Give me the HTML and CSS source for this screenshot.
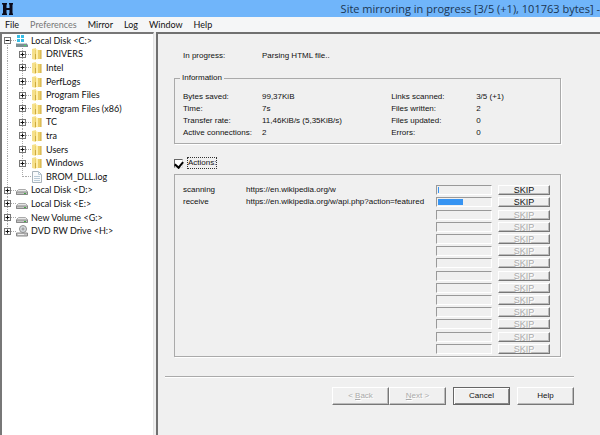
FILE: index.html
```
<!DOCTYPE html>
<html lang="en">
<head>
    <meta charset="UTF-8">
    <meta name="viewport" content="width=device-width, initial-scale=1.0">
    <title>Site mirroring in progress</title>
    <link rel="stylesheet" href="styles.css">
</head>
<body>
    <!-- shared icons -->
    <svg class="defs" aria-hidden="true">
        <symbol id="plus" viewBox="0 0 7 7">
            <rect x=".5" y=".5" width="6" height="6" fill="#fff" stroke="#777"/>
            <path d="M1.5 3.5h4M3.5 1.5v4" stroke="#111"/>
        </symbol>
        <symbol id="minus" viewBox="0 0 7 7">
            <rect x=".5" y=".5" width="6" height="6" fill="#fff" stroke="#777"/>
            <path d="M1.5 3.5h4" stroke="#111"/>
        </symbol>
        <symbol id="folder" viewBox="0 0 12 12">
            <path d="M1 1l4-1v12l-4-1z" fill="#f5e08c"/>
            <path d="M4 2h6v9H4z" fill="#ecd06a"/>
            <path d="M5 1l2 1v9.500l-2-1z" fill="#fff0ac"/>
            <path d="M10 2v9M4.500 6v5" stroke="#cfaa3e"/>
        </symbol>
        <symbol id="file" viewBox="0 0 12 12">
            <path d="M1.500.5h6l3 3v8h-9z" fill="#f8fafb" stroke="#a9b3ba"/>
            <path d="M7.500.5v3h3M3 5.500h6M3 7.500h6M3 9.500h6" fill="none" stroke="#b9cad6"/>
        </symbol>
        <symbol id="disk" viewBox="0 0 12 12">
            <path d="M2.500 5.500h7l2 2v3h-11v-3z" fill="#e6e6e6" stroke="#aaa"/>
            <path d="M.5 8h11v2.500h-11z" fill="#c4c4c4" stroke="#888"/>
            <path d="M8 9.500h2" stroke="#4a4"/>
        </symbol>
        <symbol id="system" viewBox="0 0 12 12">
            <path d="M1 0h3v3H1zM5 0h3v3H5zM1 4h3v3H1zM5 4h3v3H5z" fill="#35bde6"/>
            <path d="M1 8h9l2 2v2H0V9z" fill="#7d8e93"/>
            <path d="M1 8.500h9" stroke="#c4d2d5"/>
            <path d="M8 10.500h2" stroke="#4d6"/>
        </symbol>
        <symbol id="dvd" viewBox="0 0 12 12">
            <circle cx="7" cy="4" r="3.500" fill="#d5dade" stroke="#909090"/>
            <circle cx="7" cy="4" r="1" fill="#fff" stroke="#888"/>
            <path d="M.5 8h11v3h-11z" fill="#c4c4c4" stroke="#888"/>
            <path d="M2 9.500h6" stroke="#eee"/>
        </symbol>
    </svg>

    <div class="window">
        <header class="titlebar">
            <svg class="logo" viewBox="0 0 12 12" aria-hidden="true">
                <path d="M0 0h5v1l-.5 1v3h3V2L7 1V0h4v1l-.5 1v8l.5 1v1H7v-1l.5-1V7h-3v3l.5 1v1H0v-1l1-1V2L0 1z" fill="#0b0b1c"/>
            </svg>
            <span class="title">Site mirroring in progress [3/5 (+1), 101763 bytes] -</span>
        </header>

        <nav class="menubar">
            <button type="button">File</button>
            <button type="button" disabled>Preferences</button>
            <button type="button">Mirror</button>
            <button type="button">Log</button>
            <button type="button">Window</button>
            <button type="button">Help</button>
        </nav>

        <div class="panes">
            <aside class="tree-pane">
                <ul class="tree">
                    <li><svg class="toggle"><use href="#minus"/></svg><svg class="icon"><use href="#system"/></svg>Local Disk &lt;C:&gt;</li>
                    <li class="child"><svg class="toggle"><use href="#plus"/></svg><svg class="icon"><use href="#folder"/></svg>DRIVERS</li>
                    <li class="child"><svg class="toggle"><use href="#plus"/></svg><svg class="icon"><use href="#folder"/></svg>Intel</li>
                    <li class="child"><svg class="toggle"><use href="#plus"/></svg><svg class="icon"><use href="#folder"/></svg>PerfLogs</li>
                    <li class="child"><svg class="toggle"><use href="#plus"/></svg><svg class="icon"><use href="#folder"/></svg>Program Files</li>
                    <li class="child"><svg class="toggle"><use href="#plus"/></svg><svg class="icon"><use href="#folder"/></svg>Program Files (x86)</li>
                    <li class="child"><svg class="toggle"><use href="#plus"/></svg><svg class="icon"><use href="#folder"/></svg>TC</li>
                    <li class="child"><svg class="toggle"><use href="#plus"/></svg><svg class="icon"><use href="#folder"/></svg>tra</li>
                    <li class="child"><svg class="toggle"><use href="#plus"/></svg><svg class="icon"><use href="#folder"/></svg>Users</li>
                    <li class="child"><svg class="toggle"><use href="#plus"/></svg><svg class="icon"><use href="#folder"/></svg>Windows</li>
                    <li class="child last"><span class="toggle"></span><svg class="icon"><use href="#file"/></svg>BROM_DLL.log</li>
                    <li><svg class="toggle"><use href="#plus"/></svg><svg class="icon"><use href="#disk"/></svg>Local Disk &lt;D:&gt;</li>
                    <li><svg class="toggle"><use href="#plus"/></svg><svg class="icon"><use href="#disk"/></svg>Local Disk &lt;E:&gt;</li>
                    <li><svg class="toggle"><use href="#plus"/></svg><svg class="icon"><use href="#disk"/></svg>New Volume &lt;G:&gt;</li>
                    <li><svg class="toggle"><use href="#plus"/></svg><svg class="icon"><use href="#dvd"/></svg>DVD RW Drive &lt;H:&gt;</li>
                </ul>
            </aside>

            <main class="progress-pane">
                <div class="status">
                    <span>In progress:</span>
                    <span>Parsing HTML file..</span>
                </div>

                <fieldset class="info">
                    <legend>Information</legend>
                    <table>
                        <tr><th>Bytes saved:</th><td>99,37KiB</td><th>Links scanned:</th><td>3/5 (+1)</td></tr>
                        <tr><th>Time:</th><td>7s</td><th>Files written:</th><td>2</td></tr>
                        <tr><th>Transfer rate:</th><td>11,46KiB/s (5,35KiB/s)</td><th>Files updated:</th><td>0</td></tr>
                        <tr><th>Active connections:</th><td>2</td><th>Errors:</th><td>0</td></tr>
                    </table>
                </fieldset>

                <div class="actions-toggle">
                    <input type="checkbox" id="actions" checked>
                    <label for="actions">Actions:</label>
                </div>

                <div class="actions" id="actionList">
                    <div class="action">
                        <span>scanning</span>
                        <span>https://en.wikipedia.org/w</span>
                        <progress value="2" max="100" aria-label="scanning"></progress>
                        <button type="button">SKIP</button>
                    </div>
                    <div class="action">
                        <span>receive</span>
                        <span>https://en.wikipedia.org/w/api.php?action=featured</span>
                        <progress value="48" max="100" aria-label="receive"></progress>
                        <button type="button">SKIP</button>
                    </div>
                </div>

                <div class="wizard-buttons">
                    <div class="pair">
                        <button type="button" disabled>&lt; <u>B</u>ack</button>
                        <button type="button" disabled><u>N</u>ext &gt;</button>
                    </div>
                    <button type="button" class="default">Cancel</button>
                    <button type="button">Help</button>
                </div>
            </main>
        </div>
    </div>

    <script>
        // fill the remaining slots with idle rows
        const list = document.getElementById('actionList');
        while (list.children.length < 14) {
            const row = document.createElement('div');
            row.className = 'action';
            row.innerHTML = '<span></span><span></span>' +
                '<progress value="0" max="100" aria-label="idle"></progress>' +
                '<button type="button" disabled>SKIP</button>';
            list.appendChild(row);
        }
    </script>
</body>
</html>
```
FILE: styles.css
```
* {
    box-sizing: border-box;
}

body {
    margin: 0;
    background: #f0f0f0;
    color: #111;
    font-family: "Liberation Sans", Arial, sans-serif;
    font-size: 8px;
    line-height: 12px;
}

button {
    font: inherit;
    color: inherit;
}

.defs {
    display: none;
}

.window {
    display: flex;
    flex-direction: column;
    min-height: 100vh;
}

/* Title bar */
.titlebar {
    display: flex;
    align-items: center;
    justify-content: space-between;
    height: 17px;
    padding: 0 0 0 2px;
    background: #70b5fa;
    color: #1b3653;
    font-family: "Open Sans", "Noto Sans", sans-serif;
    font-size: 11px;
}

.logo {
    width: 12px;
    height: 12px;
}

.title {
    white-space: nowrap;
}

/* Menu */
.menubar {
    display: flex;
    gap: 11px;
    height: 15px;
    padding: 0 5px;
    background: #f5f6f7;
    font-family: Lato, "Open Sans", sans-serif;
    font-size: 9px;
}

.menubar button {
    padding: 0;
    border: 0;
    background: none;
}

.menubar button:disabled {
    color: #777;
}

.panes {
    display: flex;
    flex: 1;
    gap: 2px;
}

/* Directory tree */
.tree-pane {
    flex: 0 0 154px;
    border: solid #777;
    border-width: 2px 1px 0 2px;
    border-right-color: #e3e3e3;
    background: #fff;
    font-family: Lato, "Open Sans", sans-serif;
    font-size: 9px;
}

.tree {
    display: grid;
    grid-auto-rows: 1fr;
    min-height: 204px;
    margin: 0;
    padding: 0 0 0 2px;
    list-style: none;
}

.tree li {
    display: flex;
    align-items: center;
    white-space: nowrap;
    background: repeating-linear-gradient(#aaa 0 1px, transparent 1px 2px) 3px 0 / 1px 100% no-repeat;
}

.tree li:first-child {
    background-position: 3px 7px;
}

.tree li:last-child {
    background-size: 1px 50%;
}

.tree .child {
    padding-left: 15px;
    background:
        repeating-linear-gradient(#aaa 0 1px, transparent 1px 2px) 3px 0 / 1px 100% no-repeat,
        repeating-linear-gradient(#aaa 0 1px, transparent 1px 2px) 18px 0 / 1px 100% no-repeat;
}

.tree .last {
    background-size: 1px 100%, 1px 50%;
}

.toggle {
    flex: none;
    width: 7px;
    height: 7px;
}

.last .toggle {
    height: 1px;
    background: repeating-linear-gradient(90deg, transparent 0 1px, #aaa 1px 2px) 3px 0 no-repeat;
}

.icon {
    flex: none;
    width: 17px;
    height: 12px;
    margin-right: 3px;
    padding-left: 5px;
    background: repeating-linear-gradient(90deg, #aaa 0 1px, transparent 1px 2px) 0 50% / 5px 1px no-repeat;
}

/* Progress page */
.progress-pane {
    flex: 1;
    min-width: 0;
    padding: 16px 39px 16px 16px;
    border: solid #707070;
    border-width: 2px 0 0 2px;
}

.status {
    display: grid;
    grid-template-columns: 79px 1fr;
    padding-left: 9px;
}

.info {
    min-width: 0;
    margin: 10px 0 0;
    padding: 7px 8px 4px;
    border: 1px solid #aaa;
    box-shadow: 1px 1px #fff;
}

.info legend {
    margin-left: -3px;
    padding: 0 2px;
}

.info table {
    width: 100%;
    table-layout: fixed;
    border-collapse: collapse;
}

.info th,
.info td {
    padding: 0;
    font-weight: normal;
    text-align: left;
    white-space: nowrap;
}

.info th:first-child {
    width: 79px;
}

.info th:nth-child(3) {
    width: 85px;
}

.info td:nth-child(2) {
    width: 35%;
}

.actions-toggle {
    display: flex;
    align-items: center;
    gap: 5px;
    margin: 14px 0 6px;
}

.actions-toggle input {
    appearance: none;
    display: grid;
    place-items: center;
    width: 9px;
    height: 9px;
    margin: 0;
    border: 1px solid;
    border-color: #666 #ddd #ddd #666;
    background: #fff;
}

.actions-toggle input:checked::before {
    content: "";
    width: 4px;
    height: 6px;
    margin-bottom: 1px;
    border: solid #000;
    border-width: 0 2px 2px 0;
    transform: rotate(40deg);
}

.actions-toggle label {
    outline: 1px dotted #333;
    line-height: 10px;
}

.actions {
    display: grid;
    grid-auto-rows: 1fr;
    min-height: 183px;
    padding: 9px 10px 1px 8px;
    border: 1px solid #aaa;
    box-shadow: 1px 1px #fff;
}

.action {
    display: grid;
    grid-template-columns: 63px minmax(0, 1fr) 56px 6px 52px;
    align-items: center;
    white-space: nowrap;
}

.action progress {
    appearance: none;
    width: 56px;
    height: 10px;
    border: 1px solid;
    border-color: #999 #fff #fff #999;
}

progress::-webkit-progress-bar {
    background: #f0f0f0;
    padding: 1px;
}

progress::-webkit-progress-value {
    background: #3794f2;
}

.action button {
    grid-column: 5;
    height: 10px;
    padding: 0;
    font-size: 9px;
    line-height: 8px;
}

.action button,
.wizard-buttons button {
    border: 1px solid;
    border-color: #fff #777 #777 #fff;
    background: #f0f0f0;
    box-shadow: inset -1px -1px #bbb;
}

.action button:disabled,
.wizard-buttons button:disabled {
    color: #aaa;
    text-shadow: 1px 1px #fff;
}

.wizard-buttons {
    display: flex;
    justify-content: flex-end;
    gap: 7px;
    margin: 19px -13px 0 -9px;
    padding-top: 10px;
    border-top: 1px solid #aaa;
    box-shadow: inset 0 1px #fff;
}

.pair {
    display: flex;
}

.wizard-buttons button {
    width: 57px;
    height: 18px;
    padding: 0;
}

.wizard-buttons .default {
    border-color: #666;
    box-shadow: inset 1px 1px #fff, inset -1px -1px #888;
}
```
